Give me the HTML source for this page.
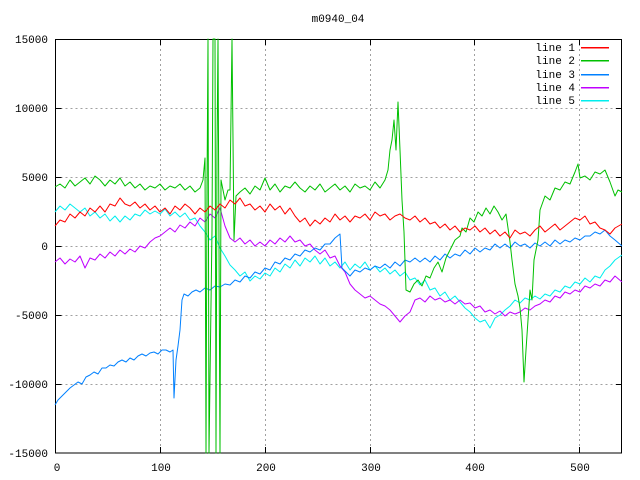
<!DOCTYPE html>
<html><head><meta charset="utf-8"><style>
html,body{margin:0;padding:0;background:#fff;}
svg{display:block;}
text{font-family:"Liberation Mono","DejaVu Sans Mono",monospace;font-size:11px;fill:#000;}
</style></head><body>
<svg width="640" height="480" viewBox="0 0 640 480" xmlns="http://www.w3.org/2000/svg">
<rect width="640" height="480" fill="#fff"/>
<g stroke="#a0a0a0" stroke-width="1" stroke-dasharray="2,3" fill="none">
<path d="M55.5 108.5H622M55.5 177.5H622M55.5 246.5H622M55.5 315.5H622M55.5 384.5H622"/>
<path d="M160.5 39V453M265.5 39V453M370.5 39V453M474.5 39V453M579.5 39V453"/>
</g>
<g stroke="#000" stroke-width="1" fill="none">
<path d="M55.5 108.5h6M55.5 177.5h6M55.5 246.5h6M55.5 315.5h6M55.5 384.5h6"/>
<path d="M622 108.5h-6M622 177.5h-6M622 246.5h-6M622 315.5h-6M622 384.5h-6"/>
<path d="M160.5 453v-6M265.5 453v-6M370.5 453v-6M474.5 453v-6M579.5 453v-6"/>
<path d="M160.5 39v6M265.5 39v6M370.5 39v6M474.5 39v6M579.5 39v6"/>
<rect x="55.5" y="39.5" width="566" height="413.5"/>
</g>
<text x="338" y="22" text-anchor="middle">m0940_04</text>
<g text-anchor="end">
<text x="48" y="43">15000</text>
<text x="48" y="112">10000</text>
<text x="48" y="181">5000</text>
<text x="48" y="250">0</text>
<text x="48" y="319">-5000</text>
<text x="48" y="388">-10000</text>
<text x="48" y="457">-15000</text>
</g>
<g text-anchor="middle">
<text x="57" y="471">0</text>
<text x="161" y="471">100</text>
<text x="266" y="471">200</text>
<text x="371" y="471">300</text>
<text x="475" y="471">400</text>
<text x="580" y="471">500</text>
</g>
<g text-anchor="end">
<text x="575" y="51">line 1</text>
<text x="575" y="64">line 2</text>
<text x="575" y="78">line 3</text>
<text x="575" y="91">line 4</text>
<text x="575" y="104">line 5</text>
</g>
<g stroke="none">
<rect x="581" y="47" width="28" height="1.5" fill="#ff0000"/>
<rect x="581" y="60" width="28" height="1.5" fill="#00c000"/>
<rect x="581" y="74" width="28" height="1.5" fill="#0080ff"/>
<rect x="581" y="87" width="28" height="1.5" fill="#c000ff"/>
<rect x="581" y="100" width="28" height="1.5" fill="#00eeee"/>
</g>
<g fill="none" stroke-width="1" stroke-linejoin="round">
<polyline stroke="#00eeee" points="55,212 60,206 65,210 70,204 75,208 80,212 85,208 90,216 95,212 100,218 105,214 110,221 115,216 120,222 125,216 130,220 135,214 140,216 145,210 150,214 155,211 160,214 165,209 170,216 175,212 180,217 185,213 190,220 195,218 200,226 205,232 210,240 215,236 220,248 225,256 230,265 235,270 240,276 245,272 250,281 255,276 260,279 265,273 270,276 275,268 280,272 285,264 290,268 295,260 300,266 305,258 310,262 315,256 320,264 325,258 330,266 335,262 340,268 345,262 350,270 355,264 360,268 365,262 370,270 375,266 380,272 385,268 390,274 395,270 400,276 405,272 410,280 415,278 420,285 425,280 430,290 435,288 440,296 445,292 450,300 455,296 460,302 465,308 470,312 475,318 480,322 485,320 490,328 495,318 500,315 505,310 510,306 515,300 520,303 525,298 530,300 535,296 540,299 545,294 550,296 555,290 560,292 565,286 570,288 575,282 580,284 585,278 590,282 595,276 600,278 605,270 610,266 615,260 622,255"/>
<polyline stroke="#c000ff" points="55,262 60,258 65,264 70,259 75,262 80,256 85,268 90,258 95,260 100,254 105,258 110,252 115,256 120,250 125,254 130,249 135,252 140,246 145,248 150,242 155,238 160,236 165,232 170,228 175,232 180,225 185,228 190,222 195,226 200,218 205,222 210,214 215,218 220,208 225,226 230,238 235,242 240,238 245,244 250,240 255,246 260,242 265,246 270,240 275,244 280,238 285,242 290,236 295,242 300,240 305,246 310,244 315,250 320,254 325,250 330,258 335,256 340,266 345,272 350,284 355,290 360,294 365,298 370,296 375,300 380,304 385,306 390,310 395,316 400,322 405,316 410,312 415,300 420,298 425,302 430,296 435,300 440,298 445,302 450,300 455,304 460,300 465,304 470,303 475,308 480,306 485,312 490,310 495,314 500,311 505,316 510,312 515,314 520,312 525,308 530,310 535,306 540,304 545,300 550,302 555,296 560,298 565,292 570,294 575,290 580,292 585,286 590,288 595,284 600,286 605,280 610,282 615,276 622,282"/>
<polyline stroke="#0080ff" points="55,405 58,400 62,396 66,392 70,388 74,385 78,382 82,384 86,377 90,375 94,372 98,374 102,368 106,368 110,365 114,366 118,362 122,360 126,362 130,358 134,360 138,356 142,354 146,356 150,353 154,352 158,354 162,350 166,350 170,352 173,350 174,398 176,360 178,346 180,330 182,300 184,294 188,296 192,292 196,290 200,292 205,288 210,290 215,286 220,287 225,284 230,285 235,280 240,282 245,276 250,278 255,272 260,274 265,268 270,270 275,262 280,264 285,258 290,260 295,254 300,256 305,250 310,252 315,248 320,250 325,244 330,244 335,238 340,234 342,268 346,272 350,276 355,270 360,272 365,268 370,270 375,266 380,268 385,264 390,268 395,262 400,266 405,260 410,262 415,258 420,262 425,258 430,262 435,256 440,260 445,254 450,258 455,254 460,256 465,250 470,254 475,248 480,252 485,248 490,250 495,244 500,248 505,244 510,248 515,242 520,246 525,244 530,248 535,243 540,246 545,242 550,246 555,240 560,244 565,240 570,242 575,238 580,240 585,236 590,236 595,232 600,234 605,230 610,236 615,240 622,246"/>
<polyline stroke="#00c000" points="55,187 60,184 65,188 70,180 75,186 80,182 85,178 90,184 95,176 100,180 105,186 110,180 115,184 120,178 125,186 130,182 135,188 140,184 145,190 150,186 155,188 160,184 165,190 170,186 175,188 180,184 185,190 190,186 195,192 200,188 203,180 205,158 206,453 207,190 208,39 209,453 212,230 213,39 215,39 216,453 217,150 218,39 220,453 221,180 225,200 228,190 230,190 232,39 234,240 236,196 240,192 245,188 250,194 255,186 260,190 265,178 270,190 275,184 280,192 285,186 290,188 295,182 300,188 305,192 310,186 315,190 320,184 325,192 330,188 335,184 340,190 345,186 350,192 355,184 360,188 365,186 370,190 375,182 380,188 385,180 388,170 390,150 392,140 394,120 396,150 398,102 400,150 402,200 404,232 406,290 410,292 414,284 418,280 422,286 426,276 430,278 434,268 438,262 442,272 446,258 450,250 455,240 460,236 462,228 466,232 470,218 474,222 478,212 482,216 486,208 490,214 494,206 498,212 502,220 506,214 510,242 512,260 515,284 518,296 520,308 522,330 524,382 526,350 528,320 530,290 532,300 534,260 538,240 540,210 545,196 550,200 555,188 560,190 565,182 570,184 575,172 578,164 580,178 585,176 590,180 595,172 600,174 605,170 610,182 615,196 618,190 622,192"/>
<polyline stroke="#ff0000" points="55,226 60,220 65,222 70,214 75,218 80,212 85,216 90,208 95,212 100,206 105,212 110,204 115,206 120,198 125,204 130,206 135,202 140,208 145,204 150,210 155,206 160,212 165,208 170,214 175,206 180,210 185,204 190,208 195,214 200,208 205,212 210,206 215,210 220,204 225,208 230,200 235,204 240,198 245,206 250,204 255,210 260,206 265,212 270,204 275,210 280,206 285,214 290,208 295,216 300,222 305,218 310,226 315,220 320,224 325,218 330,222 335,214 340,220 345,216 350,222 355,216 360,218 365,214 370,220 375,212 380,216 385,214 390,220 395,216 400,214 405,218 410,220 415,216 420,222 425,218 430,224 435,222 440,228 445,224 450,230 455,226 460,232 465,228 470,230 475,226 480,232 485,228 490,234 495,230 500,236 505,232 510,238 515,230 520,234 525,232 530,236 535,230 540,226 545,232 550,228 555,224 560,230 565,226 570,222 575,218 580,220 585,216 590,224 595,222 600,228 605,230 610,234 615,228 622,224"/>
</g>
</svg>
</body></html>
